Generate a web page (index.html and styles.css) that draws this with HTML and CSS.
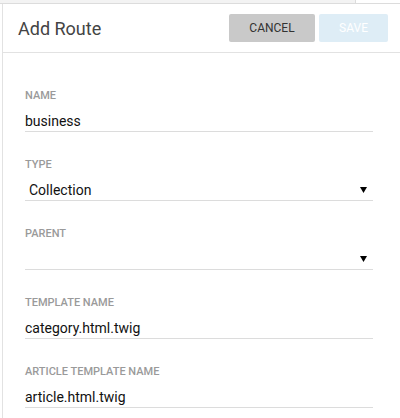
FILE: index.html
```html
<!DOCTYPE html>
<html>
<head>
<meta charset="utf-8">
<link rel="stylesheet" href="styles.css">
</head>
<body>
<div class="topbar"><div class="topbar-left"></div></div>
<div class="dialog">
  <div class="header">
    <div class="title">Add Route</div>
    <div class="actions">
      <button class="btn btn-cancel">CANCEL</button>
      <button class="btn btn-save">SAVE</button>
    </div>
  </div>
  <div class="form">
    <div class="field">
      <div class="label">NAME</div>
      <div class="input">business</div>
    </div>
    <div class="field">
      <div class="label">TYPE</div>
      <div class="input select"><span class="sel-text">Collection</span><svg class="caret" width="7" height="6" viewBox="0 0 7 6"><path d="M0 0H7L3.5 6Z" fill="#000"/></svg></div>
    </div>
    <div class="field">
      <div class="label">PARENT</div>
      <div class="input select"><span class="sel-text"></span><svg class="caret" width="7" height="6" viewBox="0 0 7 6"><path d="M0 0H7L3.5 6Z" fill="#000"/></svg></div>
    </div>
    <div class="field">
      <div class="label">TEMPLATE NAME</div>
      <div class="input">category.html.twig</div>
    </div>
    <div class="field">
      <div class="label">ARTICLE TEMPLATE NAME</div>
      <div class="input">article.html.twig</div>
    </div>
  </div>
</div>
</body>
</html>
```
FILE: styles.css
```css
html, body {
  margin: 0;
  padding: 0;
  background: #fff;
  font-family: Roboto, "Noto Sans", sans-serif;
}
body {
  width: 400px;
  height: 418px;
  overflow: hidden;
}
.topbar {
  height: 3px;
  border-bottom: 1px solid #dcdcdc;
  display: flex;
}
.topbar-left {
  width: 355px;
  background: #f3f3f3;
  border-right: 1px solid #dcdcdc;
}
.dialog {
  margin-left: 2px;
  border-left: 1px solid #e2e2e2;
  height: 414px;
}
.header {
  height: 48px;
  border-bottom: 1px solid #e2e2e2;
  display: flex;
  align-items: center;
  justify-content: space-between;
  padding: 0 12px 0 15px;
}
.title {
  font-size: 18px;
  color: #444;
  font-weight: 400;
}
.actions {
  display: flex;
  gap: 4px;
}
.btn {
  height: 28px;
  border: none;
  border-radius: 2px;
  font-family: Roboto, sans-serif;
  font-size: 12px;
  padding: 0;
  cursor: pointer;
}
.btn-cancel {
  width: 86px;
  background: #c9c9c9;
  color: #333;
}
.btn-save {
  width: 69px;
  background: #deedf6;
  color: #fff;
}
.form {
  padding: 10px 27px 0 22px;
}
.field {
  padding-top: 27px;
}
.label {
  font-size: 11px;
  line-height: 12px;
  font-weight: 500;
  color: #9a9a9a;
  margin-bottom: 9px;
}
.input {
  font-size: 14px;
  line-height: 20px;
  height: 20px;
  color: #111;
  border-bottom: 1px solid #dcdcdc;
}
.select {
  display: flex;
  align-items: center;
  justify-content: space-between;
  padding: 0 6px 0 4px;
}
.caret {
  display: block;
}
```
